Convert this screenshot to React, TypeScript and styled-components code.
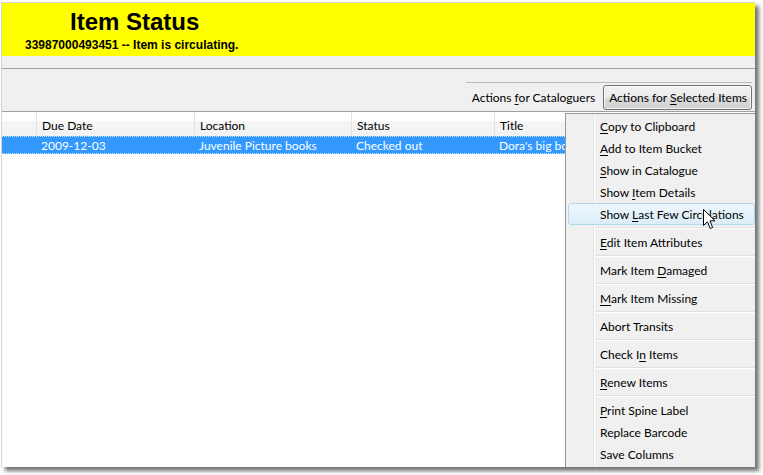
import * as React from "react";
import styled, { createGlobalStyle } from "styled-components";

const GlobalStyle = createGlobalStyle`
  html, body {
    margin: 0;
    padding: 0;
    background: #fff;
  }
  body {
    font-family: Lato, "Noto Sans", sans-serif;
    font-size: 12px;
    color: #000;
  }
`;

const Stage = styled.div`
  position: relative;
  width: 763px;
  height: 475px;
  padding: 2px 0 0 1px;
  box-sizing: border-box;
  overflow: hidden;
`;

const Frame = styled.div`
  position: relative;
  width: 754px;
  height: 465px;
  box-sizing: border-box;
  border-left: 1px solid #d6d6d6;
  border-top: 1px solid #d6d6d6;
  display: flex;
  flex-direction: column;
  overflow: hidden;
  box-shadow: 4px 4px 4px rgba(0, 0, 0, 0.55);
`;

const Banner = styled.div`
  height: 53px;
  flex: none;
  background: #ffff00;
  box-sizing: border-box;
  padding-top: 6px;
`;

const Title = styled.div`
  padding-left: 68px;
  font-family: "Liberation Sans", Arial, sans-serif;
  font-weight: bold;
  font-size: 24px;
  line-height: 26px;
`;

const Subtitle = styled.div`
  padding-left: 23px;
  margin-top: 3px;
  font-family: "Liberation Sans", Arial, sans-serif;
  font-weight: bold;
  font-size: 12px;
  line-height: 14px;
`;

const Band = styled.div`
  height: 12px;
  flex: none;
  background: #f0f0f0;
  border-bottom: 1px solid #a0a0a0;
`;

const ToolArea = styled.div`
  height: 43px;
  flex: none;
  box-sizing: border-box;
  background: #f0f0f0;
  border-bottom: 1px solid #a0a0a0;
  display: flex;
  justify-content: flex-end;
  align-items: flex-end;
  padding-right: 3px;
`;

const Toolbar = styled.div`
  height: 29px;
  box-sizing: border-box;
  border-top: 1px solid #b9b9b9;
  display: flex;
  align-items: flex-start;
  padding-top: 2px;
  gap: 3px;
`;

const ToolButton = styled.div<{ $pressed?: boolean }>`
  height: 25px;
  box-sizing: border-box;
  display: flex;
  align-items: center;
  padding: 0 4px 0 5px;
  white-space: nowrap;
  border: 1px solid ${(p) => (p.$pressed ? "#707070" : "transparent")};
  border-radius: 3px;
  background: ${(p) =>
    p.$pressed
      ? "linear-gradient(to bottom, #f2f2f2 0%, #ebebeb 48%, #dddddd 52%, #cfcfcf 100%)"
      : "transparent"};
  box-shadow: ${(p) => (p.$pressed ? "inset 0 0 0 1px rgba(255,255,255,0.7)" : "none")};
`;

const Label = styled.span`
  white-space: pre;
`;

const Key = styled.span`
  text-decoration: underline;
  text-underline-offset: 2px;
`;

const Tree = styled.div`
  flex: 1;
  position: relative;
  background: #fff;
`;

const Columns = "35px 158px 157px 143px 1fr";

const TreeHead = styled.div`
  display: grid;
  grid-template-columns: ${Columns};
  height: 24px;
  background: linear-gradient(to bottom, #ffffff 0%, #ffffff 38%, #f5f5f5 40%, #f1f2f2 100%);
`;

const HeadCell = styled.div`
  box-sizing: border-box;
  border-right: 1px solid #e3e3e3;
  padding: 2px 0 0 5px;
  display: flex;
  align-items: center;
  white-space: nowrap;
  overflow: hidden;
`;

const Row = styled.div<{ $selected?: boolean }>`
  display: grid;
  grid-template-columns: ${Columns};
  height: 18px;
  box-sizing: border-box;
  background: ${(p) => (p.$selected ? "#3399ff" : "transparent")};
  color: ${(p) => (p.$selected ? "#fff" : "#000")};
  border-top: 1px dotted #c9e2fb;
  border-bottom: 1px dotted #c9e2fb;
`;

const Cell = styled.div`
  padding: 1px 0 0 4px;
  display: flex;
  align-items: center;
  white-space: nowrap;
  overflow: hidden;
`;

const Menu = styled.div`
  position: absolute;
  left: 563px;
  top: 110px;
  right: 0;
  bottom: 0;
  box-sizing: border-box;
  background: #f0f0f0;
  border-left: 1px solid #979797;
  border-top: 1px solid #979797;
  padding-top: 1px;

  &::before {
    content: "";
    position: absolute;
    left: 27px;
    top: 0;
    bottom: 0;
    width: 1px;
    background: #e2e3e3;
    border-right: 1px solid #ffffff;
  }
`;

const MenuItem = styled.div<{ $hot?: boolean }>`
  position: relative;
  height: 22px;
  box-sizing: border-box;
  margin: 0 0 0 2px;
  padding-left: ${(p) => (p.$hot ? 31 : 32)}px;
  display: flex;
  align-items: center;
  white-space: nowrap;
  border-radius: 3px;
  border: ${(p) => (p.$hot ? "1px solid #aed8ee" : "none")};
  background: ${(p) =>
    p.$hot ? "linear-gradient(to bottom, #eef6fc 0%, #dcedf8 100%)" : "transparent"};
`;

const Separator = styled.div`
  position: relative;
  height: 6px;
  margin-left: 30px;

  &::after {
    content: "";
    position: absolute;
    left: 0;
    right: 0;
    top: 2px;
    height: 1px;
    background: #e0e0e0;
    border-bottom: 1px solid #ffffff;
  }
`;

const Cursor = styled.svg`
  position: absolute;
  left: 703px;
  top: 209px;
`;

type Entry = { label: React.ReactNode; hot?: boolean } | "sep";

const entries: Entry[] = [
  { label: <><Key>C</Key>opy to Clipboard</> },
  { label: <><Key>A</Key>dd to Item Bucket</> },
  { label: <><Key>S</Key>how in Catalogue</> },
  { label: <>Show <Key>I</Key>tem Details</> },
  { label: <>Show <Key>L</Key>ast Few Circulations</>, hot: true },
  "sep",
  { label: <><Key>E</Key>dit Item Attributes</> },
  "sep",
  { label: <>Mark Item <Key>D</Key>amaged</> },
  "sep",
  { label: <><Key>M</Key>ark Item Missing</> },
  "sep",
  { label: <>Abort Transits</> },
  "sep",
  { label: <>Check I<Key>n</Key> Items</> },
  "sep",
  { label: <><Key>R</Key>enew Items</> },
  "sep",
  { label: <><Key>P</Key>rint Spine Label</> },
  { label: <>Replace Barcode</> },
  { label: <>Save Columns</> },
];

export default function App() {
  return (
    <>
      <GlobalStyle />
      <Stage>
        <Frame>
          <Banner>
            <Title>Item Status</Title>
            <Subtitle>33987000493451 -- Item is circulating.</Subtitle>
          </Banner>
          <Band />
          <ToolArea>
            <Toolbar>
              <ToolButton>
                <Label>
                  Actions <Key>f</Key>or Cataloguers
                </Label>
              </ToolButton>
              <ToolButton $pressed>
                <Label>
                  Actions for <Key>S</Key>elected Items
                </Label>
              </ToolButton>
            </Toolbar>
          </ToolArea>
          <Tree>
            <TreeHead>
              <HeadCell />
              <HeadCell>Due Date</HeadCell>
              <HeadCell>Location</HeadCell>
              <HeadCell>Status</HeadCell>
              <HeadCell>Title</HeadCell>
            </TreeHead>
            <Row $selected>
              <Cell />
              <Cell>2009-12-03</Cell>
              <Cell>Juvenile Picture books</Cell>
              <Cell>Checked out</Cell>
              <Cell>Dora's big book of words</Cell>
            </Row>
          </Tree>
          <Menu>
            {entries.map((e, i) =>
              e === "sep" ? (
                <Separator key={i} />
              ) : (
                <MenuItem key={i} $hot={e.hot}>
                  <Label>{e.label}</Label>
                </MenuItem>
              )
            )}
          </Menu>
        </Frame>
        <Cursor width="14" height="22" viewBox="0 0 14 22">
          <path
            d="M0.5 0.5 L0.5 16.5 L4.5 12.8 L7.2 19.5 L9.6 18.5 L7 11.8 L12 11.8 Z"
            fill="#fff"
            stroke="#000"
            strokeWidth="1"
            strokeLinejoin="miter"
          />
        </Cursor>
      </Stage>
    </>
  );
}
